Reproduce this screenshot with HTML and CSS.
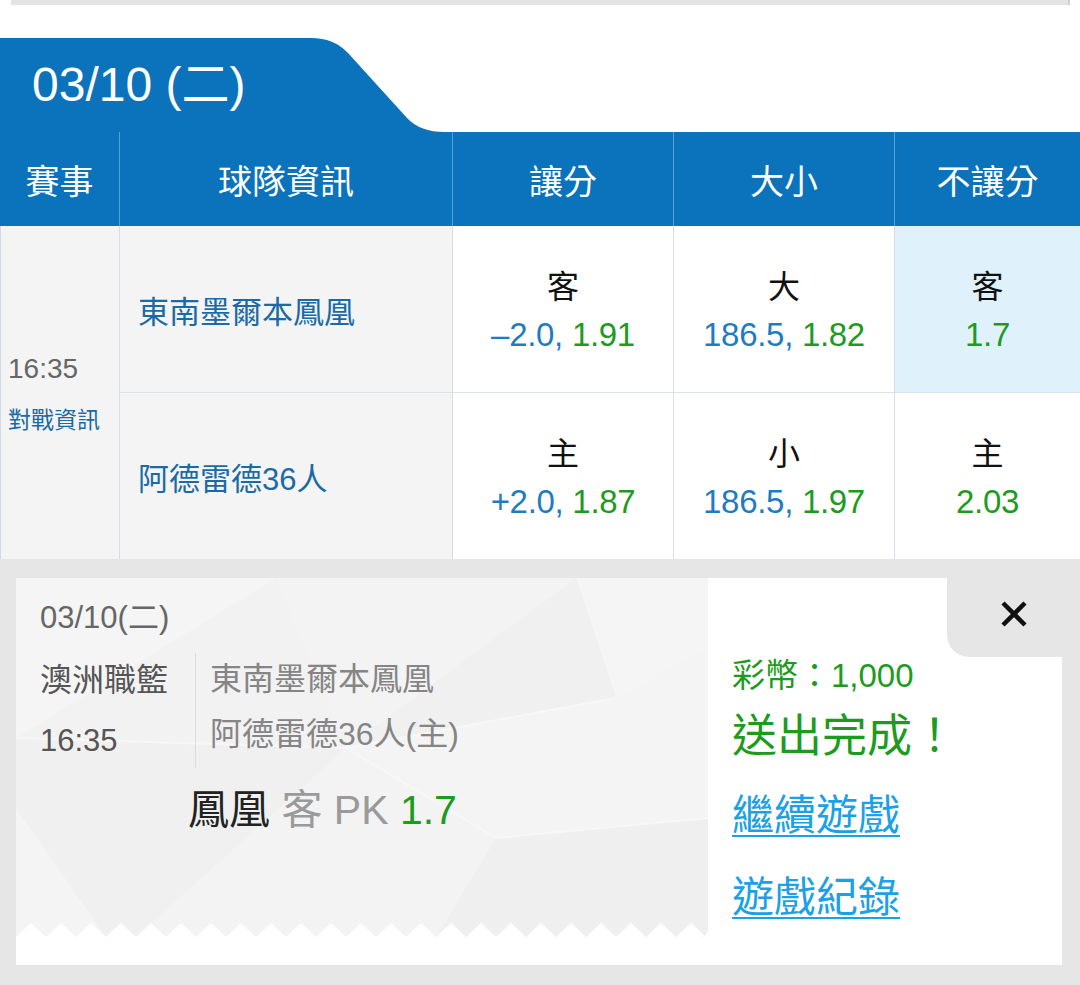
FILE: index.html
```html
<!DOCTYPE html>
<html lang="zh-Hant">
<head>
<meta charset="utf-8">
<title>賽事</title>
<link rel="stylesheet" href="styles.css">
</head>
<body>
<div class="page">
  <div class="topbar"></div>

  <div class="tabrow">
    <div class="tab-label">03/10 (二)</div>
    <svg class="tab-curve" width="136" height="94" viewBox="0 0 136 94"><path d="M0 0 Q23 0 37 15 L96 80 Q109 94 134 94 L0 94 Z" fill="#0b73bb"/></svg>
  </div>

  <div class="grid">
    <div class="hcell">賽事</div>
    <div class="hcell">球隊資訊</div>
    <div class="hcell">讓分</div>
    <div class="hcell">大小</div>
    <div class="hcell">不讓分</div>

    <div class="match">
      <div class="time">16:35</div>
      <div class="info">對戰資訊</div>
    </div>
    <div class="team r1">東南墨爾本鳳凰</div>
    <div class="odds r1"><div class="side">客</div><div class="val"><span class="b">–2.0,</span> <span class="g">1.91</span></div></div>
    <div class="odds r1"><div class="side">大</div><div class="val"><span class="b">186.5,</span> <span class="g">1.82</span></div></div>
    <div class="odds r1 hl"><div class="side">客</div><div class="val"><span class="g">1.7</span></div></div>

    <div class="team">阿德雷德36人</div>
    <div class="odds"><div class="side">主</div><div class="val"><span class="b">+2.0,</span> <span class="g">1.87</span></div></div>
    <div class="odds"><div class="side">小</div><div class="val"><span class="b">186.5,</span> <span class="g">1.97</span></div></div>
    <div class="odds"><div class="side">主</div><div class="val"><span class="g">2.03</span></div></div>
  </div>

  <div class="overlay">
    <div class="ticket">
      <div class="slip">
        <svg class="slip-bg" width="692" height="359" viewBox="0 0 692 359">
          <defs>
            <pattern id="zz" x="0" y="345" width="30" height="14" patternUnits="userSpaceOnUse">
              <path d="M0 14 L15 0 L30 14 Z" fill="#ffffff"/>
            </pattern>
          </defs>
          <rect width="692" height="359" fill="#f2f2f2"/>
          <polygon points="0,0 260,0 0,160" fill="#f5f5f5"/>
          <polygon points="260,0 560,0 330,170" fill="#f3f3f3"/>
          <polygon points="560,0 692,0 692,70 600,120" fill="#f5f5f5"/>
          <polygon points="330,170 560,0 600,120" fill="#f0f0f0"/>
          <polygon points="0,160 330,170 120,359 0,359" fill="#f0f0f0"/>
          <polygon points="330,170 600,120 692,70 692,240 480,260" fill="#f4f4f4"/>
          <polygon points="120,359 330,170 480,260 420,359" fill="#f3f3f3"/>
          <polygon points="480,260 692,240 692,359 420,359" fill="#efefef"/>
          <polygon points="0,230 90,359 0,359" fill="#f4f4f4"/>
          <path d="M0 160 L330 170 L600 120 M330 170 L480 260 L692 240" stroke="#f7f7f7" stroke-width="2" fill="none"/>
          <rect x="0" y="345" width="692" height="14" fill="url(#zz)"/>
        </svg>
        <div class="slip-date">03/10(二)</div>
        <div class="slip-info">
          <div class="slip-league">
            <div class="lg">澳洲職籃</div>
            <div class="lt">16:35</div>
          </div>
          <div class="slip-teams">
            <div class="tm1">東南墨爾本鳳凰</div>
            <div class="tm2">阿德雷德36人(主)</div>
          </div>
        </div>
        <div class="slip-pick"><span class="pk-team">鳳凰</span> <span class="pk-mid">客 PK</span> <span class="pk-odd">1.7</span></div>
      </div>

      <div class="result">
        <div class="close-row">
          <div class="close">
            <svg width="28" height="28" viewBox="0 0 28 28"><path d="M3 3 L25 25 M25 3 L3 25" stroke="#111" stroke-width="4.5" fill="none"/></svg>
          </div>
        </div>
        <div class="coins">彩幣：1,000</div>
        <div class="done">送出完成！</div>
        <a class="link l1" href="#">繼續遊戲</a>
        <a class="link l2" href="#">遊戲紀錄</a>
      </div>
    </div>
  </div>
</div>
</body>
</html>
```

FILE: styles.css
```css
* { box-sizing: border-box; }

body {
  margin: 0;
  background: #ffffff;
  font-family: "Liberation Sans", "Noto Sans CJK TC", sans-serif;
}

.page {
  width: 1080px;
  overflow: hidden;
}

.topbar {
  height: 5px;
  margin: 0 10px 0 11px;
  background: #e4e4e4;
  border-right: 2px solid #d0d0d0;
}

.tabrow {
  display: flex;
  margin-top: 33px;
  height: 94px;
}

.tab-label {
  width: 312px;
  background: #0b73bb;
  color: #ffffff;
  font-size: 48px;
  line-height: 94px;
  padding-left: 32px;
  white-space: nowrap;
}

.tab-curve {
  display: block;
  margin-left: -1px;
}

.grid {
  display: grid;
  grid-template-columns: 119px 333px 221px 221px 186px;
  grid-template-rows: 94px 167px 166px;
}

.hcell {
  background: #0b73bb;
  color: #ffffff;
  font-size: 34px;
  display: flex;
  align-items: center;
  justify-content: center;
  border-left: 1px solid #5b9fd2;
}

.hcell:first-child {
  border-left: none;
}

.match {
  grid-row: 2 / 4;
  background: #f4f4f4;
  border-left: 1px solid #cfdae6;
  display: flex;
  flex-direction: column;
  justify-content: center;
  padding-left: 7px;
}

.time {
  font-size: 28px;
  line-height: 36px;
  color: #666666;
}

.info {
  font-size: 23px;
  line-height: 30px;
  color: #1a6aa5;
  margin-top: 18px;
}

.team {
  background: #f4f4f4;
  border-left: 1px solid #d6dde5;
  display: flex;
  align-items: center;
  padding-left: 18px;
  font-size: 31px;
  color: #1a6aa5;
}

.odds {
  border-left: 1px solid #d6dde5;
  text-align: center;
  display: flex;
  flex-direction: column;
  justify-content: center;
  padding-top: 4px;
}

.r1 {
  border-bottom: 1px solid #dde2e8;
}

.odds.hl {
  background: #dff1fb;
}

.side {
  font-size: 32px;
  line-height: 48px;
  color: #111111;
}

.val {
  font-size: 33px;
  line-height: 48px;
  letter-spacing: -0.3px;
}

.b { color: #1f7cc0; }
.g { color: #1e9b1e; }

/* overlay */
.overlay {
  background: #e6e6e6;
  padding: 19px 18px 20px 16px;
}

.ticket {
  display: flex;
  align-items: flex-start;
  background: #ffffff;
  height: 387px;
}

.slip {
  position: relative;
  width: 692px;
  height: 359px;
  padding-left: 24px;
  padding-top: 20px;
  border-bottom-right-radius: 8px;
  overflow: hidden;
}

.slip-bg {
  position: absolute;
  left: 0;
  top: 0;
  display: block;
}

.slip-date,
.slip-info,
.slip-pick {
  position: relative;
}

.slip-date {
  font-size: 31px;
  line-height: 40px;
  color: #666666;
}

.slip-info {
  display: flex;
  margin-top: 15px;
}

.slip-league {
  width: 155px;
  color: #555555;
}

.lg {
  font-size: 32px;
  line-height: 54px;
}

.lt {
  font-size: 31px;
  line-height: 54px;
  margin-top: 7px;
}

.slip-teams {
  border-left: 1px solid #dddddd;
  padding-left: 14px;
  color: #858585;
  font-size: 32px;
}

.tm1 {
  line-height: 52px;
}

.tm2 {
  line-height: 52px;
  margin-top: 3px;
}

.slip-pick {
  margin-top: 17px;
  padding-left: 148px;
  font-size: 41px;
  line-height: 50px;
  white-space: nowrap;
}

.pk-team { color: #222222; }
.pk-mid { color: #9a9a9a; }
.pk-odd { color: #1e9b1e; }

.result {
  flex: 1;
  display: flex;
  flex-direction: column;
  align-items: flex-start;
  padding-left: 24px;
}

.close-row {
  align-self: stretch;
  display: flex;
  justify-content: flex-end;
}

.close {
  width: 115px;
  height: 79px;
  background: #e6e6e6;
  border-bottom-left-radius: 22px;
  padding: 22px 0 0 53px;
}

.close svg {
  display: block;
}

.coins {
  font-size: 33px;
  line-height: 38px;
  color: #1e9b1e;
}

.done {
  font-size: 45px;
  line-height: 52px;
  margin-top: 16px;
  color: #1e9b1e;
}

.link {
  display: block;
  font-size: 42px;
  line-height: 52px;
  color: #1ba1e6;
  text-decoration: underline;
  text-decoration-thickness: 2px;
  text-underline-offset: 5px;
}

.l1 { margin-top: 27px; }
.l2 { margin-top: 30px; }
```
